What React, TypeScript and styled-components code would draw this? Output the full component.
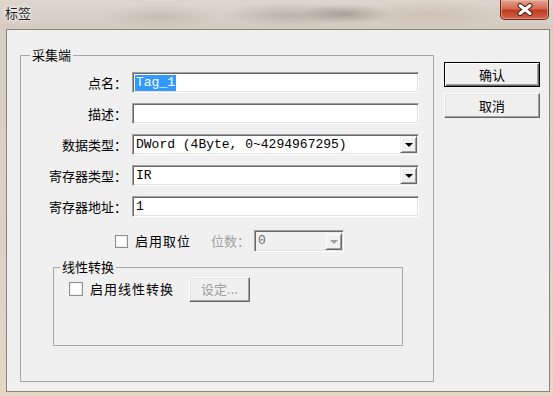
import React from "react";
import styled, { createGlobalStyle } from "styled-components";

const GlobalStyle = createGlobalStyle`
  html, body {
    margin: 0;
    padding: 0;
    background: #ffffff;
  }
  body {
    font-family: "Noto Sans CJK SC", "Noto Sans", sans-serif;
    font-size: 13px;
    color: #000;
  }
`;

const Window = styled.div`
  width: 553px;
  height: 396px;
  display: flex;
  flex-direction: column;
  background: linear-gradient(180deg, #d6cdc3 0%, #dcd1c6 60%, #e6d6c6 100%);
  box-sizing: border-box;
  overflow: hidden;
`;

const TitleBar = styled.div`
  height: 29px;
  flex-shrink: 0;
  display: flex;
  justify-content: space-between;
  align-items: flex-start;
  padding: 0 4px 0 5px;
  box-sizing: border-box;
  background:
    radial-gradient(ellipse 70px 12px at 290px 15px, rgba(120, 110, 100, 0.3), transparent),
    radial-gradient(ellipse 45px 10px at 345px 14px, rgba(90, 80, 70, 0.35), transparent),
    radial-gradient(ellipse 60px 12px at 160px 17px, rgba(140, 130, 120, 0.25), transparent),
    radial-gradient(ellipse 90px 14px at 430px 14px, rgba(160, 135, 110, 0.2), transparent),
    linear-gradient(180deg, #ded6ce 0%, #d4cbc1 100%);
`;

const Caption = styled.span`
  margin-top: 5px;
  font-size: 13px;
  line-height: 16px;
  color: #1c1c1c;
  text-shadow: 0 0 6px #fff, 0 0 3px #fff;
`;

const CloseButton = styled.div`
  width: 49px;
  height: 20px;
  box-sizing: border-box;
  display: flex;
  align-items: center;
  justify-content: center;
  border: 1px solid #6a2619;
  border-top: none;
  border-radius: 0 0 5px 5px;
  background: linear-gradient(180deg, #e4a591 0%, #d26a50 45%, #c13c22 55%, #d0644a 100%);
  box-shadow: inset 0 0 0 1px rgba(255, 205, 185, 0.45);
`;

const Frame = styled.div`
  flex: 1;
  display: flex;
  padding: 0 3px 4px 6px;
`;

const Client = styled.div`
  flex: 1;
  display: flex;
  align-items: flex-start;
  gap: 10px;
  background: #f0f0f0;
  border: 1px solid #8c8378;
  padding: 17px 9px 9px 13px;
`;

const MainGroup = styled.fieldset`
  margin: 0;
  width: 414px;
  box-sizing: border-box;
  padding: 9px 0 35px 0;
  border: 1px solid #a8a8a8;
  min-inline-size: 0;
`;

const GroupTitle = styled.legend<{ $indent: number }>`
  margin-left: ${(p) => p.$indent}px;
  padding: 0 2px;
  font-size: 13px;
  line-height: 16px;
`;

const FieldGrid = styled.div`
  display: grid;
  grid-template-columns: 106px 287px;
  grid-auto-rows: 21px;
  column-gap: 5px;
  row-gap: 10px;
`;

const Label = styled.label`
  text-align: right;
  line-height: 21px;
  white-space: nowrap;
  font-size: 13px;
`;

const TextBox = styled.div<{ $disabled?: boolean }>`
  height: 21px;
  box-sizing: border-box;
  display: flex;
  align-items: center;
  background: ${(p) => (p.$disabled ? "#f0f0f0" : "#ffffff")};
  border: 1px solid;
  border-color: #a0a0a0 #ffffff #ffffff #a0a0a0;
  box-shadow: inset 1px 1px 0 #696969, inset -1px -1px 0 #e3e3e3;
  padding: 0 0 0 2px;
  font-family: "Liberation Mono", monospace;
  font-size: 13px;
  line-height: 16px;
  color: ${(p) => (p.$disabled ? "#6d6d6d" : "#000")};
  white-space: nowrap;
  overflow: hidden;
`;

const Value = styled.span`
  flex: 1;
  padding-left: 1px;
`;

const Selected = styled.span`
  background: #3399ff;
  color: #ffffff;
  padding: 0 1px;
`;

const DropButton = styled.div`
  width: 17px;
  height: 17px;
  margin-right: 1px;
  flex-shrink: 0;
  box-sizing: border-box;
  display: flex;
  align-items: center;
  justify-content: center;
  background: #f0f0f0;
  border: 1px solid;
  border-color: #f0f0f0 #696969 #696969 #f0f0f0;
  box-shadow: inset 1px 1px 0 #ffffff, inset -1px -1px 0 #a0a0a0;
`;

const Arrow = styled.span<{ $disabled?: boolean }>`
  width: 0;
  height: 0;
  border-left: 4px solid transparent;
  border-right: 4px solid transparent;
  border-top: 4px solid ${(p) => (p.$disabled ? "#a0a0a0" : "#000")};
  margin-top: 1px;
`;

const CheckRow = styled.div`
  display: flex;
  align-items: center;
  height: 22px;
  margin-top: 13px;
  padding-left: 94px;
`;

const CheckBox = styled.span<{ $size: number }>`
  width: ${(p) => p.$size}px;
  height: ${(p) => p.$size}px;
  box-sizing: border-box;
  flex-shrink: 0;
  background: #ffffff;
  border: 1px solid #8e8f8f;
  box-shadow: inset 1px 1px 0 #f4f4f4, inset -1px -1px 0 #ececec;
`;

const CheckText = styled.span`
  margin-left: 7px;
  font-size: 13px;
  line-height: 16px;
  letter-spacing: 1px;
  white-space: nowrap;
`;

const DimText = styled.span`
  margin-left: 20px;
  margin-right: 4px;
  font-size: 13px;
  line-height: 16px;
  color: #a0a0a0;
  white-space: nowrap;
`;

const SmallCombo = styled(TextBox)`
  width: 90px;
  height: 22px;
`;

const InnerGroup = styled.fieldset`
  margin: 7px 0 0 32px;
  width: 350px;
  box-sizing: border-box;
  padding: 0 0 43px 0;
  border: 1px solid #a8a8a8;
  min-inline-size: 0;
`;

const InnerRow = styled.div`
  display: flex;
  align-items: center;
  height: 26px;
  margin-top: 1px;
  padding-left: 15px;
`;

const PushButton = styled.div<{ $default?: boolean; $disabled?: boolean }>`
  box-sizing: border-box;
  display: flex;
  align-items: center;
  justify-content: center;
  background: #f0f0f0;
  border: 1px solid;
  border-color: ${(p) => (p.$default ? "#000000" : "#ffffff #696969 #696969 #ffffff")};
  box-shadow: ${(p) =>
    p.$default
      ? "inset 1px 1px 0 #ffffff, inset -1px -1px 0 #696969, inset -2px -2px 0 #a0a0a0"
      : "inset -1px -1px 0 #a0a0a0, inset 1px 1px 0 #e3e3e3"};
  font-size: 13px;
  line-height: 16px;
  color: ${(p) => (p.$disabled ? "#a0a0a0" : "#000")};
  white-space: nowrap;
`;

const SetupButton = styled(PushButton)`
  width: 61px;
  height: 25px;
  margin-left: 15px;
`;

const ButtonColumn = styled.div`
  display: flex;
  flex-direction: column;
  gap: 6px;
  margin-top: 15px;
`;

const DialogButton = styled(PushButton)`
  width: 96px;
  height: 25px;
`;

const CloseGlyph = () => (
  <svg width="18" height="13" viewBox="0 0 18 13">
    <path d="M4 2.5 L14 10.5 M14 2.5 L4 10.5" stroke="#4f1a10" strokeWidth="5" strokeLinecap="round" />
    <path d="M4 2.5 L14 10.5 M14 2.5 L4 10.5" stroke="#ffffff" strokeWidth="3" strokeLinecap="round" />
  </svg>
);

const Combo: React.FC<{ value: string }> = ({ value }) => (
  <TextBox>
    <Value>{value}</Value>
    <DropButton>
      <Arrow />
    </DropButton>
  </TextBox>
);

export default function App() {
  return (
    <>
      <GlobalStyle />
      <Window>
        <TitleBar>
          <Caption>标签</Caption>
          <CloseButton>
            <CloseGlyph />
          </CloseButton>
        </TitleBar>
        <Frame>
          <Client>
            <MainGroup>
              <GroupTitle $indent={9}>采集端</GroupTitle>
              <FieldGrid>
                <Label>点名：</Label>
                <TextBox>
                  <Selected>Tag_1</Selected>
                </TextBox>
                <Label>描述：</Label>
                <TextBox />
                <Label>数据类型：</Label>
                <Combo value="DWord (4Byte, 0~4294967295)" />
                <Label>寄存器类型：</Label>
                <Combo value="IR" />
                <Label>寄存器地址：</Label>
                <TextBox>
                  <Value>1</Value>
                </TextBox>
              </FieldGrid>
              <CheckRow>
                <CheckBox $size={13} />
                <CheckText>启用取位</CheckText>
                <DimText>位数：</DimText>
                <SmallCombo $disabled>
                  <Value>0</Value>
                  <DropButton>
                    <Arrow $disabled />
                  </DropButton>
                </SmallCombo>
              </CheckRow>
              <InnerGroup>
                <GroupTitle $indent={6}>线性转换</GroupTitle>
                <InnerRow>
                  <CheckBox $size={14} />
                  <CheckText>启用线性转换</CheckText>
                  <SetupButton $disabled>设定...</SetupButton>
                </InnerRow>
              </InnerGroup>
            </MainGroup>
            <ButtonColumn>
              <DialogButton $default>确认</DialogButton>
              <DialogButton>取消</DialogButton>
            </ButtonColumn>
          </Client>
        </Frame>
      </Window>
    </>
  );
}
